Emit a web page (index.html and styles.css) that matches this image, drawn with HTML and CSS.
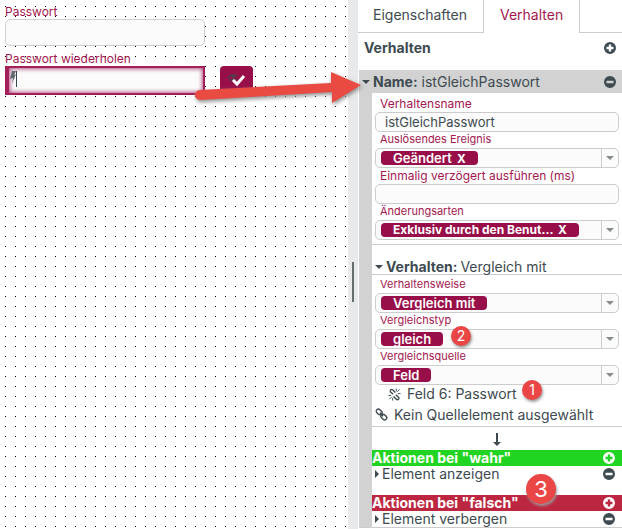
FILE: index.html
```html
<!DOCTYPE html>
<html lang="de">

<head>
    <meta charset="UTF-8">
    <meta name="viewport" content="width=device-width, initial-scale=1.0">

    <title>Formular-Designer | Verhalten</title>

    <link rel="stylesheet" href="styles.css">
</head>

<body>
    <!-- icons -->
    <svg class="sprite" width="0" height="0">
        <symbol id="plus" viewBox="0 0 12 12">
            <path fill="currentColor" fill-rule="evenodd" d="M6 0a6 6 0 1 1 0 12A6 6 0 0 1 6 0zM4.8 2.5v2.3H2.5v2.4h2.3v2.3h2.4V7.2h2.3V4.8H7.2V2.5z" />
        </symbol>
        <symbol id="minus" viewBox="0 0 12 12">
            <path fill="currentColor" fill-rule="evenodd" d="M6 0a6 6 0 1 1 0 12A6 6 0 0 1 6 0zM2.5 4.8v2.4h7V4.8z" />
        </symbol>
        <symbol id="link" viewBox="0 0 14 14">
            <g fill="none" stroke="currentColor" stroke-width="1.5">
                <rect x="1" y="2" width="7" height="4.6" rx="2.3" transform="rotate(45 4.5 4.3)" />
                <rect x="6" y="7.4" width="7" height="4.6" rx="2.3" transform="rotate(45 9.5 9.7)" />
                <path d="M5.2 5.2l3.6 3.6" />
            </g>
        </symbol>
        <symbol id="unlink" viewBox="0 0 14 14">
            <g fill="none" stroke="currentColor" stroke-width="1.5">
                <path d="M5.500 6.800L2.800 4.200a1.600 1.600 0 0 1 2.200-2.300L8 4.800" />
                <path d="M8.500 7.200l2.800 2.700a1.600 1.600 0 0 1-2.300 2.300L6 9.200" />
                <path stroke-width="1" d="M.5 8h3M1.500 12l2.500-2.500M5 13.500v-3M10.500 6h3M10 4l2.500-2.500M9 .5v3" />
            </g>
        </symbol>
    </svg>

    <main>
        <form class="canvas">
            <label for="passwort">Passwort</label>
            <input type="password" id="passwort">

            <label for="wiederholen">Passwort wiederholen</label>
            <div class="row">
                <div class="active">
                    <input type="password" id="wiederholen">
                    <svg class="bolt" width="8" height="16" viewBox="0 0 8 16">
                        <path fill="#5f686d" d="M2 0h4L4 4l2-1-4 10 1-6-3 1z" />
                        <path stroke="#38454c" d="M6.500 0v16" />
                    </svg>
                </div>
                <button type="button" class="confirm" aria-label="Prüfen">
                    <svg width="20" height="16" viewBox="0 0 20 16">
                        <path fill="none" stroke="#5b3a4c" stroke-width="1.500" d="M1 6q4-5 10-2M1 6q5 5 9 1M5 4l4 4M8 3L5 8" />
                        <path fill="none" stroke="#fff" stroke-width="3" d="M6 8l4 4 7-8" />
                    </svg>
                </button>
            </div>
        </form>

        <div class="splitter"><span class="handle"></span></div>

        <aside>
            <nav>
                <a href="#eigenschaften">Eigenschaften</a>
                <a href="#verhalten" class="current">Verhalten</a>
            </nav>

            <header>
                <h1>Verhalten</h1>
                <button class="icon" aria-label="Hinzufügen"><svg><use href="#plus" /></svg></button>
            </header>

            <section class="behaviour">
                <div class="name">
                    <span class="down"></span>
                    <h2>Name:</h2>
                    <span>istGleichPasswort</span>
                    <button class="icon" aria-label="Entfernen"><svg><use href="#minus" /></svg></button>
                </div>

                <div class="content">
                    <div class="fields">
                        <label for="verhaltensname" class="text">Verhaltensname</label>
                        <input type="text" id="verhaltensname" value="istGleichPasswort">

                        <label for="ereignis">Auslösendes Ereignis</label>
                        <div class="combo">
                            <span class="chip">Geändert <button aria-label="Geändert entfernen">X</button></span>
                            <select id="ereignis"><option></option></select>
                        </div>

                        <label for="verzoegert" class="text">Einmalig verzögert ausführen (ms)</label>
                        <input type="text" id="verzoegert">

                        <label for="arten">Änderungsarten</label>
                        <div class="combo">
                            <span class="chip long">Exklusiv durch den Benut... <button aria-label="Exklusiv entfernen">X</button></span>
                            <select id="arten"><option></option></select>
                        </div>
                    </div>

                    <div class="subtitle">
                        <span class="down"></span>
                        <h2>Verhalten:</h2>
                        <span>Vergleich mit</span>
                    </div>

                    <div class="fields compare">
                        <label for="weise">Verhaltensweise</label>
                        <div class="combo">
                            <span class="chip">Vergleich mit</span>
                            <select id="weise"><option></option></select>
                        </div>

                        <label for="typ">Vergleichstyp</label>
                        <div class="combo">
                            <span class="chip">gleich</span>
                            <select id="typ"><option></option></select>
                            <span class="badge two">2</span>
                        </div>

                        <label for="quelle">Vergleichsquelle</label>
                        <div class="combo">
                            <span class="chip">Feld</span>
                            <select id="quelle"><option></option></select>
                        </div>

                        <p class="source indent">
                            <svg><use href="#unlink" /></svg>Feld 6: Passwort
                            <span class="badge one">1</span>
                        </p>
                        <p class="source"><svg><use href="#link" /></svg>Kein Quellelement ausgewählt</p>
                    </div>

                    <div class="then">
                        <svg width="8" height="13" viewBox="0 0 8 13">
                            <path fill="#3d4a50" d="M3 0h2v9h3l-4 4-4-4h3z" />
                        </svg>
                    </div>

                    <div class="actions true">
                        <h3>Aktionen bei "wahr"</h3>
                        <button class="icon" aria-label="Aktion hinzufügen"><svg><use href="#plus" /></svg></button>
                    </div>
                    <div class="action">
                        <span class="right"></span>Element anzeigen
                        <button class="icon" aria-label="Aktion entfernen"><svg><use href="#minus" /></svg></button>
                        <span class="badge three">3</span>
                    </div>

                    <div class="actions false">
                        <h3>Aktionen bei "falsch"</h3>
                        <button class="icon" aria-label="Aktion hinzufügen"><svg><use href="#plus" /></svg></button>
                    </div>
                    <div class="action">
                        <span class="right"></span>Element verbergen
                        <button class="icon" aria-label="Aktion entfernen"><svg><use href="#minus" /></svg></button>
                    </div>
                </div>
            </section>
        </aside>

        <!-- arrow from the field to its behaviour -->
        <svg class="arrow" width="180" height="42" viewBox="0 0 180 42">
            <path fill="#e94b43" d="M10 20L141 13V2L171 15 142 33V22L10 30a5 5 0 0 1 0-10z" />
        </svg>
    </main>
</body>

</html>
```

FILE: styles.css
```css
* {
    margin: 0;
    padding: 0;
    box-sizing: border-box;
}

body {
    font-family: Inter, "Open Sans", sans-serif;
    font-size: 14px;
    line-height: 16px;
    color: #3d4a50;

    background-color: white;
}

button,
input,
select {
    font-family: inherit;
    border: none;
    background: none;
    color: inherit;
}

.sprite {
    position: absolute;
}

main {
    position: relative;

    display: flex;

    min-height: 100vh;
}

/* canvas */

.canvas {
    flex: 1;

    padding: 5px;

    /* 1px dot every 10px */
    background-image: linear-gradient(to right, transparent 1px, white 1px), linear-gradient(black 1px, white 1px);
    background-size: 10px 10px;
    background-position: 5px 6px;
}

.canvas label {
    display: block;

    height: 14px;

    font-size: 12px;
    line-height: 14px;
    color: #a3174f;
}

.canvas input {
    display: block;

    width: 200px;
    height: 27px;

    margin-bottom: 6px;
    padding: 0 8px;

    border: solid 1px #cfcfcf;
    border-radius: 5px;

    background-color: #fbfbfb;
}

.row {
    display: flex;
    gap: 15px;
}

.active {
    position: relative;
}

.canvas .active input {
    height: 29px;

    margin: 0;

    border: solid 2px #a3205a;
    border-left-width: 4px;
    border-radius: 0;

    box-shadow: inset 0 0 4px 1px #b0527f;
}

.bolt {
    position: absolute;
    left: 5px;
    top: 5px;
}

.confirm {
    width: 33px;
    height: 27px;

    border-radius: 4px;

    background-color: #980e48;
}

.confirm svg {
    display: block;

    margin: 0 auto;
}

.splitter {
    width: 10px;

    padding: 262px 4px 0;

    background-color: #e8e9eb;
}

.handle {
    display: block;

    width: 2px;
    height: 40px;

    background-color: #666b6e;
}

/* side panel */

aside {
    width: 264px;
}

nav {
    display: flex;

    height: 33px;
}

nav::after {
    content: "";

    flex: 1;

    border-bottom: solid 1px #ccc;
}

nav a {
    padding: 6px 16px 6px 15px;

    border-bottom: solid 1px #ccc;

    line-height: 17px;
    color: inherit;
    text-decoration: none;
}

nav .current {
    padding: 6px 16px;

    border: solid 1px #ccc;
    border-width: 0 1px;

    color: #a3174f;
}

header {
    display: flex;
    align-items: center;

    height: 29px;

    margin-bottom: 8px;
    padding: 0 6px;
}

h1,
h2,
h3 {
    font-size: 14px;
    font-weight: 700;
}

.icon {
    width: 12px;
    height: 12px;

    margin-left: auto;
}

.icon svg {
    display: block;

    width: 12px;
    height: 12px;
}

.behaviour {
    margin-left: 1px;
    padding-left: 13px;

    border-bottom: solid 1px #ccc;

    background-color: #d2d2d2;
}

.name {
    display: flex;
    align-items: center;
    gap: 4px;

    height: 23px;

    margin-left: -13px;
    padding: 0 6px 0 3px;
}

.down {
    border: solid 4px transparent;
    border-top-color: #3d4a50;
    border-bottom: none;
}

.name .down {
    margin-right: -1px;
}

.right {
    margin-right: 3px;

    border: solid 4px transparent;
    border-left-color: #3d4a50;
    border-right: none;
}

.content {
    background-color: white;
}

.fields {
    padding: 3px 3px 4px;

    border-bottom: solid 1px #ccc;
}

.fields label {
    display: block;

    height: 16px;

    padding-left: 5px;

    font-size: 11px;
    line-height: 15px;
    color: #a3174f;
}

.fields .text {
    font-size: 12px;
}

.fields input,
.combo {
    width: 100%;
    height: 20px;

    border: solid 1px #ccc;
    border-radius: 5px;

    background-color: #fbfbfb;
}

.fields input {
    display: block;

    padding: 0 9px;

    font-size: 13px;
}

.combo {
    position: relative;

    display: flex;
    align-items: center;
}

.chip {
    height: 14px;

    margin-left: 5px;
    padding: 0 12px;

    border-radius: 4px;

    background-color: #980e48;

    font-size: 13px;
    font-weight: 600;
    line-height: 14px;
    color: white;
    white-space: nowrap;
}

.chip button {
    margin-left: 2px;

    font-size: 12px;
    font-weight: 700;
    line-height: 14px;
}

.long {
    font-size: 12px;
    font-weight: 700;
}

.combo select {
    flex: 1;

    min-width: 0;
    height: 18px;

    appearance: none;
    background: linear-gradient(#ccc, #ccc) no-repeat right 16px top / 1px 100%;
}

.combo::after {
    content: "";

    position: absolute;
    right: 4px;
    top: 7px;

    border: solid 4px transparent;
    border-top-color: #858b8e;
    border-bottom: none;

    pointer-events: none;
}

.subtitle {
    display: flex;
    align-items: center;
    gap: 3px;

    height: 30px;

    padding: 14px 3px 0;

    border-bottom: solid 1px #ccc;
}

.compare {
    padding: 2px 3px 0;
}

.source {
    position: relative;

    display: flex;
    align-items: center;

    height: 23px;
}

.source svg {
    width: 13px;
    height: 13px;

    margin-right: 6px;
}

.indent {
    height: 18px;

    padding-left: 13px;
}

.then {
    display: flex;
    justify-content: center;

    height: 23px;

    padding-top: 6px;
}

.actions,
.action {
    position: relative;

    display: flex;
    align-items: center;

    height: 16px;

    padding-right: 7px;
}

.actions {
    color: white;
}

.true {
    background-color: #22d422;
}

.false {
    margin-top: 13px;

    background-color: #bd2640;
}

.action {
    padding-left: 3px;
}

/* markers */

.badge {
    position: absolute;

    width: 20px;
    height: 20px;

    border-radius: 50%;

    background-color: #ea4646;

    box-shadow: 1px 2px 3px #999;

    font-size: 14px;
    line-height: 20px;
    text-align: center;
    color: white;
}

.one {
    left: 147px;
    top: -5px;
}

.two {
    left: 75px;
    top: -4px;
}

.three {
    left: 154px;
    top: 8px;

    width: 30px;
    height: 30px;

    font-size: 22px;
    line-height: 30px;

    z-index: 1;
}

.arrow {
    position: absolute;
    left: 190px;
    top: 70px;

    filter: drop-shadow(1px 2px 2px #888);
}
```
